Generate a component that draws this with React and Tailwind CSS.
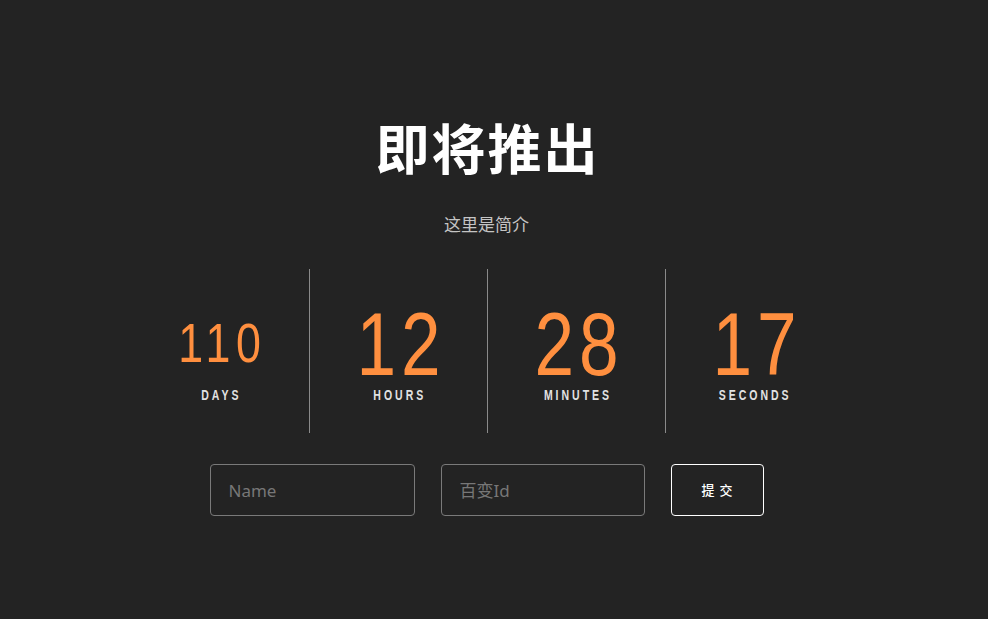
const items = [
  { v: "110", l: "DAYS", small: true },
  { v: "12", l: "HOURS" },
  { v: "28", l: "MINUTES" },
  { v: "17", l: "SECONDS" },
];

function Unit({ v, l, small, first }) {
  return (
    <div
      className={
        first
          ? "w-[178px] h-[164px] flex flex-col items-center pt-[35px]"
          : "w-[178px] h-[164px] flex flex-col items-center pt-[35px] border-l border-[#8a8a8a]"
      }
    >
      {small ? (
        <div className="h-[80px] text-[56px] leading-[78px] tracking-[7px] pl-[7px] scale-x-[0.8] text-[#ff8f3f] font-['Liberation_Sans',sans-serif]">
          {v}
        </div>
      ) : (
        <div className="h-[80px] text-[89px] leading-[80px] tracking-[6px] pl-[6px] scale-x-[0.8] text-[#ff8f3f] font-['Liberation_Sans',sans-serif]">
          {v}
        </div>
      )}
      <div className="mt-[3px] text-[14px] leading-[16px] font-bold tracking-[4px] pl-[4px] scale-x-[0.75] text-[#e2e2e2] font-['Liberation_Sans',sans-serif]">
        {l}
      </div>
    </div>
  );
}

export default function App() {
  return (
    <div className="w-full h-[619px] bg-[#232323]">
      <div className="w-[973px] h-full flex flex-col items-center font-['Noto_Sans','Noto_Sans_CJK_SC',sans-serif]">
        <h1 className="mt-[109px] text-[54px] leading-[76px] font-bold text-white tracking-[2px] pl-[2px] font-['Noto_Sans_CJK_SC',sans-serif]">
          即将推出
        </h1>
        <p className="mt-[27px] text-[17px] leading-[24px] text-[#c4c4c4] font-['Noto_Sans_CJK_SC',sans-serif]">
          这里是简介
        </p>
        <div className="mt-[33px] flex">
          {items.map((it, i) => (
            <Unit key={it.l} {...it} first={i === 0} />
          ))}
        </div>
        <div className="mt-[31px] flex gap-[26px]">
          <input
            placeholder="Name"
            className="w-[205px] h-[52px] rounded-[4px] border border-[#7a7a7a] bg-transparent px-[18px] text-[17px] text-white placeholder:text-[#777777] outline-none font-['Noto_Sans','Noto_Sans_CJK_SC',sans-serif]"
          />
          <input
            placeholder="百变Id"
            className="w-[204px] h-[52px] rounded-[4px] border border-[#7a7a7a] bg-transparent px-[18px] text-[17px] text-white placeholder:text-[#777777] outline-none font-['Noto_Sans','Noto_Sans_CJK_SC',sans-serif]"
          />
          <button className="w-[93px] h-[52px] rounded-[4px] border border-white bg-transparent text-white text-[13px] font-medium tracking-[5px] pl-[5px] font-['Noto_Sans_CJK_SC',sans-serif]">
            提交
          </button>
        </div>
      </div>
    </div>
  );
}
